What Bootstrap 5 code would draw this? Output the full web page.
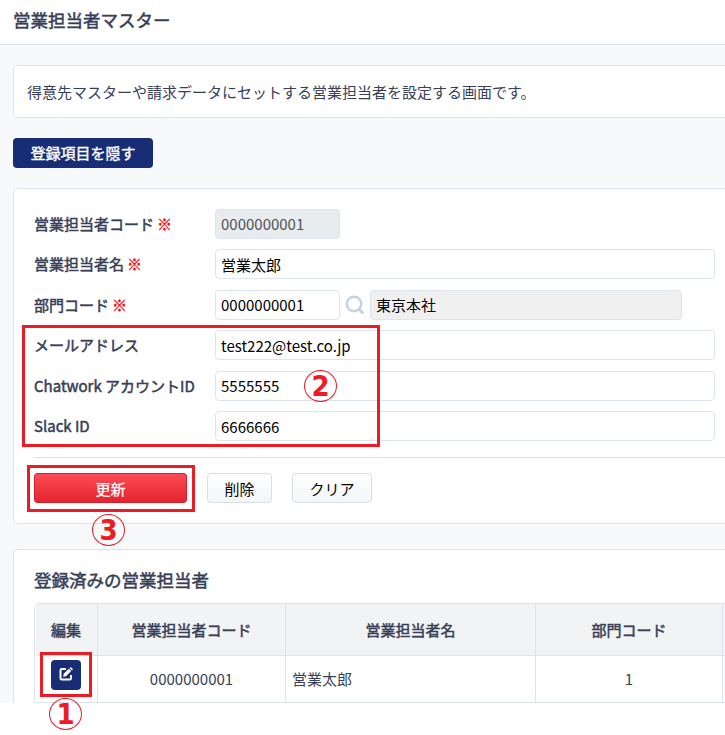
<!DOCTYPE html>
<html lang="ja">
<head>
<meta charset="utf-8">
<meta name="viewport" content="width=device-width, initial-scale=1">
<title>営業担当者マスター</title>
<link href="https://cdn.jsdelivr.net/npm/bootstrap@5.3.0/dist/css/bootstrap.min.css" rel="stylesheet">
<style>
  :root { --line: #dee4ef; --ink: #374057; --navy: #192d77; --guide: #ed1c24; }
  body { font-family: "Noto Sans CJK JP", sans-serif; font-size: 15px; color: var(--ink); background: #fff; width: 725px; height: 735px; overflow: hidden; }
  .screen { height: 703px; background: #f8f9fb; }
  .topbar { height: 45px; border-bottom: 1px solid var(--line); padding: 0 0 4px 13px; }
  .semi { font-weight: 400; -webkit-text-stroke: .5px currentColor; }
  .title-text { font-size: 17.5px; line-height: 26px; margin: 0; }
  .panel { margin-left: 13px; margin-right: -20px; background: #fff; border: 1px solid var(--line); border-radius: 4px; }
  .intro { height: 53px; margin-top: 20px; padding: 2px 0 0 13px; }
  .toggle-btn { width: 140px; height: 30px; margin: 20px 0 20px 13px; padding: 0; border: 0; border-radius: 4px; background: var(--navy); color: #fff; font-size: 15px; line-height: 30px; -webkit-text-stroke-width: .4px; }
  .form-panel { height: 336px; padding: 20px 0 0 20px; }
  .fields { row-gap: 10.4px; }
  .field-row { height: 30px; }
  .field-row label { width: 181px; line-height: 30px; }
  .req { color: #f00; margin-left: 3px; -webkit-text-stroke-width: .3px; }
  .form-control.field { height: 30px; padding: 0 5px 1px; font-size: 15px; line-height: 27px; border-color: var(--line); border-radius: 4px; color: #000; }
  .form-control.text-low { padding: 1px 5px 0; }
  .form-control.code { width: 125px; }
  .form-control.wide { width: 500px; }
  .form-control.dept { width: 312px; background: #f0f0f0; }
  .form-control.field:disabled { background: #e9ecef; color: #545454; }
  .actions { border-top: 1px solid var(--line); margin-top: 16px; padding-top: 15px; column-gap: 20px; }
  .act { height: 30px; padding: 0; font-size: 15px; line-height: 29px; border-radius: 4px; border: 1px solid #d9dde5; background: linear-gradient(#fff, #f3f5f7); color: #000; }
  .act-update { width: 153px; color: #fff; border-color: #d3202b; border-top-color: #ae2f38; background: linear-gradient(#fe4b55, #e3242e); -webkit-text-stroke: .25px #fff; }
  .act-delete { width: 65px; }
  .act-clear { width: 80px; }
  .list-panel { height: 180px; margin-top: 25px; padding: 17px 0 0 20px; }
  .grid-frame { width: 720px; margin-top: 10px; border: 1px solid var(--line); border-radius: 5px 0 0 0; padding-left: 1px; }
  .grid-table { table-layout: fixed; width: 718px; border-collapse: separate; border-spacing: 0; margin: 0; }
  .grid-table th { background: #f2f3f5; height: 52px; text-align: center; padding: 1px 0 0; border-right: 1px solid var(--line); border-bottom: 1px solid var(--line); }
  .grid-table td { height: 46px; text-align: center; padding: 0; border-right: 1px solid var(--line); }
  .grid-table th:first-child, .grid-table td:first-child { padding-right: 1px; }
  .grid-table td.person { text-align: left; padding-left: 6px; }
  .edit-btn { width: 30px; height: 30px; padding: 0 0 1px; border: 0; border-radius: 4px; background: var(--navy); margin-top: -12px; }
  .guide { position: absolute; border: 3px solid var(--guide); }
  .num { position: absolute; width: 33px; height: 32px; border: 1px solid var(--guide); border-radius: 50%; color: var(--guide); font: bold 29px/31px "DejaVu Sans Condensed", "DejaVu Sans", sans-serif; font-stretch: condensed; text-align: center; }
  .g-edit { left: 40px; top: 652px; width: 52px; height: 45px; }
  .g-ids { left: 22px; top: 325px; width: 358px; height: 122px; }
  .g-update { left: 27px; top: 465px; width: 168px; height: 47px; }
  .n1 { left: 49px; top: 698px; } .n2 { left: 304px; top: 370px; } .n3 { left: 92px; top: 514px; }
</style>
<script src="https://cdn.jsdelivr.net/npm/bootstrap@5.3.0/dist/js/bootstrap.bundle.min.js"></script>
</head>
<body class="position-relative">
<main class="screen overflow-hidden">
  <header class="topbar bg-white d-flex align-items-center"><h1 class="title-text semi">営業担当者マスター</h1></header>
  <section class="panel intro d-flex align-items-center">得意先マスターや請求データにセットする営業担当者を設定する画面です。</section>
  <button class="btn toggle-btn semi d-block">登録項目を隠す</button>
  <form class="panel form-panel">
    <div class="fields d-flex flex-column">
      <div class="field-row d-flex"><label class="semi" for="code">営業担当者コード<span class="req">※</span></label><input id="code" class="form-control field code" value="0000000001" disabled></div>
      <div class="field-row d-flex"><label class="semi" for="name">営業担当者名<span class="req">※</span></label><input id="name" class="form-control field wide text-low" value="営業太郎"></div>
      <div class="field-row d-flex"><label class="semi" for="dept">部門コード<span class="req">※</span></label><input id="dept" class="form-control field code" value="0000000001">
        <svg class="flex-shrink-0 align-self-center" width="30" height="30" viewBox="0 0 30 30" fill="none" stroke="#c5d0e0" stroke-width="2.4"><circle cx="14" cy="14" r="7.2"/><path d="M19 19.3l4.3 4.2" stroke-width="2.8"/></svg>
        <input class="form-control field dept" value="東京本社" readonly></div>
      <div class="field-row d-flex"><label class="semi" for="mail">メールアドレス</label><input id="mail" class="form-control field wide text-low" value="test222@test.co.jp"></div>
      <div class="field-row d-flex"><label class="semi" for="chat">Chatwork アカウントID</label><input id="chat" class="form-control field wide" value="5555555"></div>
      <div class="field-row d-flex"><label class="semi" for="slack">Slack ID</label><input id="slack" class="form-control field wide text-low" value="6666666"></div>
    </div>
    <div class="actions d-flex">
      <button type="button" class="btn act act-update">更新</button>
      <button type="button" class="btn act act-delete">削除</button>
      <button type="button" class="btn act act-clear">クリア</button>
    </div>
  </form>
  <section class="panel list-panel">
    <h2 class="title-text semi">登録済みの営業担当者</h2>
    <div class="grid-frame">
      <table class="grid-table">
        <colgroup><col style="width:62px"><col style="width:188px"><col style="width:250px"><col style="width:187px"><col></colgroup>
        <thead><tr><th class="semi">編集</th><th class="semi">営業担当者コード</th><th class="semi">営業担当者名</th><th class="semi">部門コード</th><th></th></tr></thead>
        <tbody><tr>
          <td><button class="btn edit-btn" aria-label="編集"><svg class="d-block mx-auto" width="14" height="14" viewBox="0 0 14 14" fill="none" stroke="#fff"><path d="M7 2H2.7Q1.5 2 1.5 3.2v8.1q0 1.2 1.2 1.2h8.1q1.2 0 1.2-1.2V8" stroke-width="2"/><path d="M4.2 9.8l.5-3 5.1-5.1 2.4 2.4-5.1 5.1zM10.5 1l.7-.6q.5-.4 1 0l1.4 1.4q.4.5 0 1l-.7.7z" fill="#fff" stroke="none"/></svg></button></td>
          <td>0000000001</td><td class="person">営業太郎</td><td>1</td><td></td>
        </tr></tbody>
      </table>
    </div>
  </section>
</main>
<div class="guide g-ids"></div><div class="num n2">2</div>
<div class="guide g-update"></div><div class="num n3">3</div>
<div class="guide g-edit"></div><div class="num n1">1</div>
</body>
</html>
